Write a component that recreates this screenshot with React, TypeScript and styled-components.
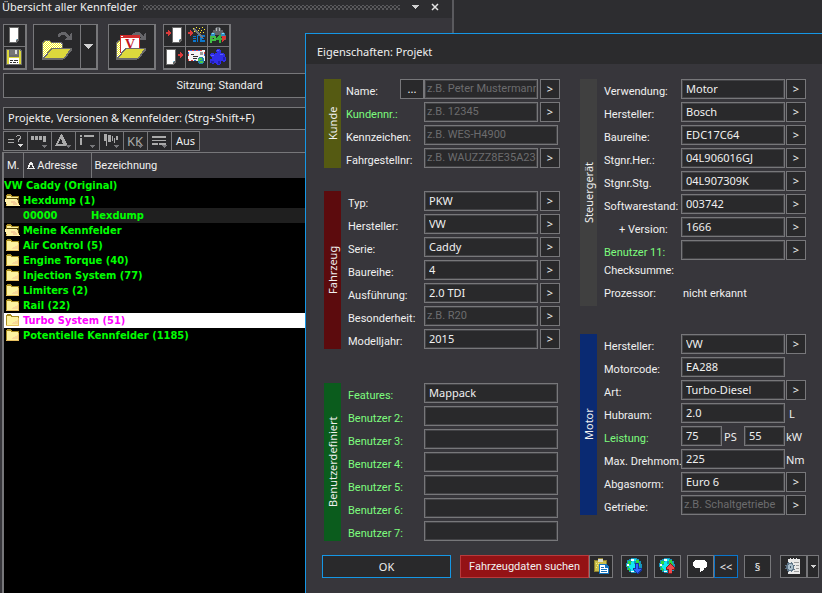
import React, { useId } from "react";
import styled, { createGlobalStyle, css } from "styled-components";

const ui = `"Noto Sans", "Open Sans", sans-serif`;
const narrow = `Roboto, "Noto Sans", sans-serif`;
const bold = `"DejaVu Sans Condensed", "Noto Sans", sans-serif`;
const line = "#77777a";
const dark = "#29292b";
const panel = "#37363b";
const green = "#7dfc7d";
const accent = "#1597e5";

const Global = createGlobalStyle`
  * { box-sizing: border-box; }
  html, body, #root { height: 100%; }
  body { margin: 0; background: #2d2d30; color: #f0f0f0; font: 11px/14px ${ui}; overflow: hidden; }
  button, input { font: inherit; color: inherit; margin: 0; }
`;

/* ---------- window and overview panel ---------- */

const Desktop = styled.div`
  position: relative;
  display: flex;
  min-height: 100vh;
`;

const Overview = styled.section`
  flex: 0 0 454px;
  display: flex;
  flex-direction: column;
  background: ${panel};
  border-right: 2px solid #5a5a5e;
`;

const TitleBar = styled.header`
  display: flex;
  align-items: center;
  height: 18px;
  padding: 0 8px 4px 2px;
  background: #2d2d30;
`;

const Title = styled.h1`
  margin: 0;
  font-size: 11px;
  font-weight: 400;
  white-space: nowrap;
`;

const Grip = styled.div`
  flex: 1;
  height: 5px;
  margin: 0 6px;
  background-image: radial-gradient(#59595c 1px, transparent 1px), radial-gradient(#59595c 1px, transparent 1px);
  background-size: 4px 4px;
  background-position: 0 0, 2px 2px;
`;

const TitleButton = styled.button`
  display: flex;
  align-items: center;
  justify-content: center;
  width: 19px;
  height: 14px;
  padding: 0;
  border: 0;
  background: none;
`;

const Toolbar = styled.div`
  display: flex;
  padding: 6px 3px 3px;
`;

const ToolGroup = styled.div<{ $columns: string; $rows?: number; $gap: number }>`
  display: grid;
  grid-template-columns: ${p => p.$columns};
  grid-template-rows: ${p => (p.$rows === 1 ? "44px" : "22px 22px")};
  margin-right: ${p => p.$gap}px;
  border: 1px solid ${line};
`;

const ToolButton = styled.button`
  display: flex;
  align-items: center;
  justify-content: center;
  min-width: 0;
  padding: 0;
  margin: -1px 0 0 -1px;
  border: 1px solid ${line};
  background: ${dark};
  width: calc(100% + 1px);
  height: calc(100% + 1px);
`;

const Session = styled.div`
  margin: 0 16px 9px 3px;
  padding: 5px 0;
  border: 1px solid ${line};
  background: ${dark};
  font-family: ${narrow};
  text-align: center;
  height: 25px;
`;

const Search = styled.input`
  margin: 0 16px 1px 3px;
  height: 23px;
  padding: 0 4px 2px;
  border: 1px solid ${line};
  border-radius: 0;
  background: ${dark};
  outline: none;
  &::placeholder { color: #f0f0f0; opacity: 1; }
`;

const Filters = styled.div`
  display: flex;
  margin: 0 3px 1px;
`;

const FilterButton = styled.button<{ $wide?: boolean }>`
  display: flex;
  align-items: center;
  justify-content: center;
  width: ${p => (p.$wide ? 29 : 25)}px;
  height: 20px;
  margin-right: -1px;
  padding: 0;
  border: 1px solid ${line};
  background: ${dark};
`;

const TreeFrame = styled.div`
  flex: 1;
  margin-left: 2px;
  border: 1px solid ${line};
  border-width: 1px 0 0 2px;
  background: #000;
`;

const Tree = styled.table`
  width: 100%;
  table-layout: fixed;
  border-collapse: collapse;
  font: 700 11px/15px ${bold};
  color: #00ff00;
`;

const HeadCell = styled.th<{ $width?: number }>`
  width: ${p => (p.$width ? `${p.$width}px` : "auto")};
  height: 25px;
  padding: 0 0 0 3px;
  border-right: 1px solid ${line};
  background: ${panel};
  color: #f0f0f0;
  font-family: ${narrow};
  font-weight: 400;
  text-align: left;
  white-space: nowrap;
`;

const TreeRow = styled.tr<{ $kind?: "shaded" | "selected" }>`
  height: 15px;
  ${p => p.$kind === "shaded" && css`background: #1f1f1f;`}
  ${p => p.$kind === "selected" && css`background: #fff; color: #ff00ff;`}
`;

const Cell = styled.td`
  padding: 0;
  height: 15px;
  white-space: nowrap;
  overflow: hidden;
`;

const Entry = styled.span`
  display: flex;
  align-items: center;
  gap: 3px;
  height: 15px;
  padding-left: 1px;
`;

/* ---------- dialog ---------- */

const Dialog = styled.form`
  position: absolute;
  inset: 33px 0 0 305px;
  display: flex;
  flex-direction: column;
  border: 1px solid ${accent};
  border-width: 1px 0 0 1px;
  background: ${panel};
`;

const DialogTitle = styled.h2`
  margin: 0 0 15px;
  height: 30px;
  padding: 11px 0 0 11px;
  background: #2b2b2d;
  font-size: 11px;
  font-weight: 400;
`;

const Columns = styled.div`
  display: grid;
  grid-template-columns: minmax(0, 236fr) minmax(0, 226fr);
  gap: 20px;
  padding: 0 16px 0 18px;
`;

const Column = styled.div<{ $gaps: string }>`
  display: grid;
  align-content: start;
  grid-template-columns: minmax(0, 1fr);
  grid-template-rows: ${p => p.$gaps};
`;

const Group = styled.section`
  display: flex;
  align-self: start;
`;

const GroupName = styled.h3<{ $color: string }>`
  flex: 0 0 17px;
  margin: 0;
  background: ${p => p.$color};
  font-size: 11px;
  line-height: 17px;
  font-weight: 400;
  text-align: center;
  writing-mode: vertical-rl;
  transform: rotate(180deg);
`;

const Rows = styled.div<{ $indent: number }>`
  flex: 1;
  min-width: 0;
  display: grid;
  grid-template-columns: minmax(0, 1fr);
  gap: 3px;
  padding-left: ${p => p.$indent}px;
`;

const Row = styled.div`
  display: flex;
  height: 20px;
`;

const Label = styled.label<{ $width: number; $user?: boolean; $inset?: boolean }>`
  flex: 0 0 ${p => p.$width}px;
  min-width: 0;
  padding: 6px 0 0 ${p => (p.$inset ? 15 : 0)}px;
  color: ${p => (p.$user ? green : "#f0f0f0")};
  font-family: ${narrow};
  white-space: nowrap;
`;

const TextField = styled.input`
  flex: 1 1 0;
  min-width: 0;
  height: 20px;
  padding: 0 1px 2px 4px;
  border: 1px solid ${line};
  border-radius: 0;
  background: ${dark};
  box-shadow: inset 0 0 0 1px #434346;
  outline: none;
  &:placeholder-shown { padding-left: 2px; font-family: ${narrow}; }
  &::placeholder { color: #6c6c6e; opacity: 1; }
`;

const PickButton = styled.button<{ $gap?: number }>`
  flex: 0 0 20px;
  height: 20px;
  margin-left: ${p => p.$gap ?? 2}px;
  padding: 0;
  border: 1px solid ${line};
  background: ${dark};
  line-height: 16px;
`;

const MoreButton = styled(PickButton)`
  flex-basis: 24px;
`;

const Unit = styled.span<{ $width: number; $pad?: number }>`
  flex: 0 0 ${p => p.$width}px;
  padding: 4px 0 0 ${p => p.$pad ?? 2}px;
`;

const Spacer = styled.span<{ $width: number }>`
  flex: 0 0 ${p => p.$width}px;
`;

const Value = styled.output`
  padding: 0 0 0 2px;
  font-family: ${narrow};
`;

const PlainRow = styled(Row)`
  & > * { padding-top: 1px; }
`;

const Footer = styled.footer`
  display: flex;
  height: 23px;
  margin-top: 14px;
  padding: 0 3px 0 16px;
`;

const Action = styled.button<{ $width?: number; $gap?: number; $tone?: "ok" | "alert" | "active" }>`
  flex: ${p => (p.$width ? `0 0 ${p.$width}px` : "1 1 0")};
  display: flex;
  align-items: center;
  justify-content: center;
  min-width: 0;
  height: 23px;
  margin-left: ${p => p.$gap ?? 0}px;
  padding: 0;
  border: 1px solid ${line};
  background: ${dark};
  white-space: nowrap;
  ${p => p.$tone === "ok" && css`border-color: ${accent};`}
  ${p => p.$tone === "active" && css`border-color: #0a76cc;`}
  ${p => p.$tone === "alert" && css`border-color: #b93a3c; background: #941215; font-family: ${narrow};`}
`;

/* ---------- icons ---------- */

const Svg = ({ w = 17, h = 17, children }: { w?: number; h?: number; children: React.ReactNode }) => (
  <svg width={w} height={h} viewBox={`0 0 ${w} ${h}`} shapeRendering="crispEdges" aria-hidden="true">
    {children}
  </svg>
);

const Sheet = ({ x = 0 }: { x?: number }) => (
  <g transform={`translate(${x} 0)`}>
    <path d="M0 0h10v13l-3 3h-7z" fill="#6b6b6b" />
    <path d="M1 1h8v11h-2v3h-6z" fill="#fff" />
    <path d="M7 12h1v1h-1z" fill="#7fd0e8" />
  </g>
);

const Floppy = () => (
  <Svg>
    <path d="M0 0h14l2 2v14h-16z" fill="#6b6b6b" />
    <path d="M1 1h2v7h10v-7h1l1 2v12h-14z" fill="#dcd83c" />
    <path d="M4 1h8v5h-8z" fill="#777" />
    <path d="M9 1h2v4h-2z" fill="#ddd" />
    <path d="M3 9h10v6h-10z" fill="#fff" />
    <path d="M4 11h3v1h-3zM8 11h4v1h-4zM4 13h2v1h-2zM7 13h3v1h-3zM11 13h1v1h-1z" fill="#333" />
  </Svg>
);

const OpenFolder = ({ version }: { version?: boolean }) => (
  <Svg w={version ? 31 : 30} h={31}>
    <defs>
      <pattern id="dither" width="2" height="2" patternUnits="userSpaceOnUse">
        <rect width="2" height="2" fill="#f4f020" />
        <path d="M0 0h1v1h-1zM1 1h1v1h-1z" fill="#fff" />
      </pattern>
    </defs>
    <path d="M16 4v-1h1v-1h2v-1h5v1h1v1h1v1h1v1h1v-2h1v-1h1v7h-7v-1h1v-1h1v-1h-1v-1h-1v-1h-4v1h-1v1h-2z" fill="#66666a" />
    <path d="M0 29v-18l2-2h5l2 2h10l2 2v16z" fill="#6b6b6b" />
    <path d="M1 26v-14l2-2h4l2 2h9l2 2v10z" fill="url(#dither)" />
    {version && (
      <>
        <path d="M4 4h20v18h-20z" fill="#d02c2c" />
        <path d="M5 7h18v15h-18z" fill="#fff" />
        <path d="M5 5h2v1h-2z" fill="#fff" />
        <text x="14" y="18" textAnchor="middle" fontFamily="Liberation Serif" fontWeight="700" fontSize="14" fill="#c4161c">V</text>
      </>
    )}
    <path d="M1 28v-1l8-10h21v2l-7 9z" fill="#6b6b6b" />
    <path d="M3 27l7-9h18l-6 9z" fill="#dcd83c" />
  </Svg>
);

const RedArrow = ({ x }: { x: number }) => <path d={`M${x} 5h2v-2h1v1h1v1h1v2h-1v1h-1v1h-1v-2h-2z`} fill="#dc3a3a" />;

const ImportIcon = () => <Svg><RedArrow x={0} /><Sheet x={6} /></Svg>;
const ExportIcon = () => <Svg><Sheet /><RedArrow x={12} /></Svg>;

const Wizard = () => (
  <Svg>
    <RedArrow x={0} />
    <path d="M5 9h3v1h-3zM5 11h3v1h-3zM5 13h3v2h-3zM9 8h1v7h-1zM10 8h1v1h-1zM12 8h5v2h-3v1h2v1h-2v1h3v2h-5z" fill="#0b78d0" />
    <path d="M5 1h2v1h1v1h1v1h1v1h1v1h1v1h1v1h1v1h1v2h-2v-1h-1v-1h-1v-1h-1v-1h-1v-1h-1v-1h-1v-1h-1v-1h-1z" fill="#77777b" />
    <path d="M5 1h1v1h-1zM8 0h1v1h-1zM11 1h1v1h-1zM14 0h1v1h-1zM10 3h1v1h-1zM13 3h1v1h-1zM16 2h1v1h-1zM12 5h1v1h-1zM15 5h1v1h-1zM6 4h1v1h-1z" fill="#ffee30" />
  </Svg>
);

const Binoculars = () => (
  <Svg>
    <path d="M6 0h4v1h1v2h2v2h1v1h1v2h1v5h-3v-3h-2v-2h-6v2h-2v3h-3v-5h1v-2h1v-1h1v-2h2v-2h1z" fill="#606468" />
    <path d="M6 1h1v3h-1zM9 1h1v3h-1z" fill="#b4b7ba" />
    <path d="M1 6h4v3h-4zM11 6h4v3h-4z" fill="#2f8dc1" />
    <path d="M2 6h2v1h-2zM12 6h2v1h-2z" fill="#81e1f4" />
    <path d="M0 9h6v5h-4v2h-2zM2 11v1h2v-1z" fill="#42bf45" fillRule="evenodd" />
    <path d="M9 8h2v3h1v2h-1v3h-2v-3h-3v-2h1v-1h1v-1h1z" fill="#35b33c" />
    <path d="M12 9h4v3h-1v1h-1v1h-1v1h-1z" fill="#db3634" />
  </Svg>
);

const Mail = () => (
  <Svg>
    <path d="M0 1h17v11h-17z" fill="#f4f4f4" />
    <path d="M0 1h2v1h-2zM4 1h2v1h-2zM8 1h2v1h-2zM12 1h2v1h-2zM0 5h1v2h-1zM0 10h1v2h-1zM16 3h1v2h-1zM3 11h2v1h-2z" fill="#dd3c3c" />
    <path d="M2 1h2v1h-2zM6 1h2v1h-2zM10 1h2v1h-2zM0 3h1v2h-1zM16 5h1v2h-1zM6 11h2v1h-2z" fill="#3564cc" />
    <path d="M3 5h3v1h-3zM5 7h5v1h-5zM5 9h4v1h-4z" fill="#333" />
    <path d="M12 3h3v3h-3z" fill="#999" />
    <path d="M11 8h4v1h1v5h-1v1h-4v-1h-1v-5h1z" fill="#2484ae" />
    <path d="M11 9h3v2h-2v1h-2v-2zM12 12h3v2h-3z" fill="#49ca49" />
  </Svg>
);

const Puzzle = () => (
  <Svg>
    <path d="M6 1h1v-1h3v1h1v3h3v1h1v3h1v4h-1v1h-2v-1h-2v3h-1v1h-3v-1h-1v-1h-2v1h-2v-1h-2v-4h2v-2h-1v-1h-1v-2h1v-1h3v1h1v-1h2v-1h-1z" fill="#302de8" />
    <path d="M7 1h2v1h-2zM10 5h3v1h-3zM1 6h3v1h-3z" fill="#5b60f6" />
    <path d="M1 12h3v2h-3zM8 12h2v3h-2zM13 8h2v3h-2z" fill="#211fb0" />
  </Svg>
);

const Arrow = ({ w, h, color = "#d0d0d0" }: { w: number; h: number; color?: string }) => (
  <Svg w={w} h={h}><path d={`M0 0H${w}L${w / 2} ${h}Z`} fill={color} /></Svg>
);

const Close = () => (
  <svg width="8" height="8" viewBox="0 0 8 8" aria-hidden="true">
    <path d="M1 1l6 6M7 1l-6 6" stroke="#e4e4e4" strokeWidth="1.5" />
  </svg>
);

const gray = "#aaa";
const filterArt: Record<string, React.ReactNode> = {
  Vergleich: <><path d="M1 6h6v1h-6zM1 9h6v1h-6zM9 3h1v-1h3v1h1v3h-1v1h-1v2h-1v-3h1v-1h1v-2h-3v1h-1z" fill={gray} /><path d="M11 11h5l-3 3z" fill="#ddd" /></>,
  Balken: <path d="M0 3h3v4h-3zM4 3h3v4h-3zM8 3h3v4h-3zM12 3h3v6h-3z" fill={gray} />,
  Differenz: <path d="M6 1h1l6 12h-13zM6 5l-3 6h5z" fill={gray} fillRule="evenodd" />,
  Achse: <path d="M1 2h2v2h-2zM1 5h2v7h-2zM5 2h10v2h-10z" fill={gray} />,
  Verlauf: <path d="M1 1h3v12h-1v-5h-2zM5 2h3v7h-3zM9 3h1v5h-1zM11 5h1v5h-1zM13 3h2v4h-2z" fill={gray} />,
  Kennung: <text x="0" y="13" fontFamily="Noto Sans" fontSize="13" fill={gray}>KK</text>,
  Liste: <path d="M1 3h14v2h-14zM1 7h14v1h-14zM1 10h6v2h-6zM8 10h7v2h-7z" fill={gray} />,
};

const FilterIcon = ({ name }: { name: string }) => (
  <Svg h={16}>{filterArt[name]}{name !== "Vergleich" && <path d="M11 12h5l-3 3z" fill="#77777a" />}</Svg>
);

const SmallFolder = ({ open }: { open?: boolean }) => (
  <Svg w={15} h={13}>
    <path d="M1 1h1v-1h4v1h1v1h7v10h-13z" fill="#a88c22" />
    <path d="M2 2h4v1h7v8h-11z" fill="#fdf3a0" />
    <path d="M2 11h11v-7h1v8h-13v-1z" fill="#e8c060" />
    <path d="M7 10h6v-5l-2 2h-1v1h-2z" fill="#f9d898" />
    {open && (
      <>
        <path d="M2 5h9l2 2v2h1v-5h-12z" fill="#5c4a08" />
        <path d="M0 5h10v1h1v1h1v1h1v2h1v1h1v1h-13v-2h-1v-2h-1z" fill="#fff0a8" />
        <path d="M6 7h4v1h1v1h1v2h-4v-2h-2z" fill="#f6cf98" />
      </>
    )}
  </Svg>
);

const Clipboard = () => (
  <Svg w={16}>
    <path d="M1 2h4v-2h5v2h4v12h-13z" fill="#8d812c" />
    <path d="M2 3h11v10h-11z" fill="#c9bd4c" />
    <path d="M5 1h5v3h-5z" fill="#dfdfcf" />
    <path d="M3 5h1v1h-1zM5 5h1v1h-1zM4 7h1v1h-1zM3 9h1v1h-1z" fill="#f4f083" />
    <path d="M6 6h7l3 3v7h-10z" fill="#1273be" />
    <path d="M7 7h5v3h3v5h-8z" fill="#fff" />
    <path d="M8 9h3v1h-3zM8 11h6v1h-6zM8 13h6v1h-6z" fill="#1573bd" />
  </Svg>
);

const Globe = ({ up }: { up?: boolean }) => (
  <Svg>
    <path d="M5 0h6v1h2v2h2v3h1v4h-1v3h-2v2h-8v-1h-2v-2h-2v-3h-1v-4h1v-3h2v-1h2z" fill="#1696bd" />
    <path d="M6 1h4v2h-2v3h2v4h-2v3h-3v-2h-2v-4h2v-3h1z" fill="#12eaf0" />
    <path d="M2 3h3v3h-2v3h-2v-3h1zM10 2h3v3h1v3h-3v-2h-1v-3zM2 10h2v3h-1z" fill="#30d83d" />
    <path d="M5 1h3v2h-3zM1 6h2v2h-2zM5 13h3v1h-3z" fill="#fff" />
    {up
      ? <><path d="M11 5h1l4 5v2h-3v4h-4v-4h-2v-2z" fill="#7d1d20" /><path d="M11 6h1l3 4v1h-2v4h-3v-4h-2v-1z" fill="#f4484b" /></>
      : <><path d="M9 5h4v5h3v2l-4 4h-1l-4-4v-2h2z" fill="#1733a0" /><path d="M10 6h2v5h3l-3 4h-1l-3-4h2z" fill="#2e68ff" /></>}
  </Svg>
);

const Bubble = () => (
  <Svg w={15} h={13}>
    <path d="M2 0h10v1h1v1h1v5h-1v1h-2v2h-1v1h-2v1h-1v-4h-5v-1h-1v-1h-1v-4h1v-1h1z" fill="#fff" />
  </Svg>
);

const SheetGear = () => (
  <Svg>
    <path d="M3 1h2v-1h1v1h2v-1h1v1h2v-1h1v1h3v15h-12z" fill="#e9e9e9" />
    <path d="M9 4h5v1h-5zM11 7h3v1h-3zM11 10h3v1h-3zM9 13h5v1h-5z" fill="#9d9d9d" />
    <path d="M3 4h1v1h2v-1h1v1h1v2h2v1h-1v3h1v1h-2v1h-1v1h-1v-1h-2v1h-1v-1h-1v-2h-2v-1h1v-2h-1v-1h2v-2h1z" fill="#5f7587" />
    <path d="M4 6h3v1h1v4h-1v1h-3v-1h-1v-4h1z" fill="#a8bdcb" />
    <path d="M5 8h1v2h-1z" fill="#445566" />
  </Svg>
);

/* ---------- data ---------- */

type FieldDef = {
  label: string;
  value?: string;
  hint?: string;
  user?: boolean;
  inset?: boolean;
  more?: boolean;
  pick?: boolean;
  unit?: string;
  unitPad?: number;
};

const customer: FieldDef[] = [
  { label: "Name:", hint: "z.B. Peter Mustermann", more: true, pick: true },
  { label: "Kundennr.:", hint: "z.B. 12345", user: true, pick: true },
  { label: "Kennzeichen:", hint: "z.B. WES-H4900" },
  { label: "Fahrgestellnr:", hint: "z.B. WAUZZZ8E35A235", pick: true },
];

const vehicle: FieldDef[] = [
  { label: "Typ:", value: "PKW", pick: true },
  { label: "Hersteller:", value: "VW", pick: true },
  { label: "Serie:", value: "Caddy", pick: true },
  { label: "Baureihe:", value: "4", pick: true },
  { label: "Ausführung:", value: "2.0 TDI", pick: true },
  { label: "Besonderheit:", hint: "z.B. R20", pick: true },
  { label: "Modelljahr:", value: "2015", pick: true },
];

const custom: FieldDef[] = [
  { label: "Features:", value: "Mappack", user: true },
  ...[2, 3, 4, 5, 6, 7].map(n => ({ label: `Benutzer ${n}:`, value: "", user: true })),
];

const ecu: FieldDef[] = [
  { label: "Verwendung:", value: "Motor", pick: true },
  { label: "Hersteller:", value: "Bosch", pick: true },
  { label: "Baureihe:", value: "EDC17C64", pick: true },
  { label: "Stgnr.Her.:", value: "04L906016GJ", pick: true },
  { label: "Stgnr.Stg.", value: "04L907309K", pick: true },
  { label: "Softwarestand:", value: "003742", pick: true },
  { label: "+ Version:", value: "1666", inset: true, pick: true },
  { label: "Benutzer 11:", value: "", user: true, pick: true },
];

const engineTop: FieldDef[] = [
  { label: "Hersteller:", value: "VW", pick: true },
  { label: "Motorcode:", value: "EA288" },
  { label: "Art:", value: "Turbo-Diesel", pick: true },
  { label: "Hubraum:", value: "2.0", unit: "L", unitPad: 4 },
];

const engineBottom: FieldDef[] = [
  { label: "Max. Drehmom.", value: "225", unit: "Nm", unitPad: 1 },
  { label: "Abgasnorm:", value: "Euro 6", pick: true },
  { label: "Getriebe:", hint: "z.B. Schaltgetriebe", pick: true },
];

const folders: { name: string; open?: boolean; selected?: boolean }[] = [
  { name: "Meine Kennfelder", open: true },
  { name: "Air Control (5)" },
  { name: "Engine Torque (40)" },
  { name: "Injection System (77)" },
  { name: "Limiters (2)" },
  { name: "Rail (22)" },
  { name: "Turbo System (51)", selected: true },
  { name: "Potentielle Kennfelder (1185)" },
];

/* ---------- composed parts ---------- */

const Field = ({ def, labelWidth, tail, gap }: { def: FieldDef; labelWidth: number; tail: number; gap?: number }) => {
  const id = useId();
  return (
    <Row>
      <Label htmlFor={id} $width={def.more ? labelWidth - 24 : labelWidth} $user={def.user} $inset={def.inset}>{def.label}</Label>
      {def.more && <MoreButton type="button" $gap={0} aria-label="Name auswählen">...</MoreButton>}
      <TextField id={id} defaultValue={def.value} placeholder={def.hint} />
      {def.pick && <PickButton type="button" $gap={gap} aria-label={`${def.label} Auswahl`}>&gt;</PickButton>}
      {def.unit && <Unit $width={tail} $pad={def.unitPad}>{def.unit}</Unit>}
      {!def.pick && !def.unit && <Spacer $width={tail} />}
    </Row>
  );
};

const FieldGroup = ({ name, color, indent, children }: { name: string; color: string; indent: number; children: React.ReactNode }) => (
  <Group aria-label={name}>
    <GroupName $color={color}>{name}</GroupName>
    <Rows $indent={indent}>{children}</Rows>
  </Group>
);

const Power = () => {
  const id = useId();
  return (
    <Row>
      <Label htmlFor={id} $width={77} $user>Leistung:</Label>
      <TextField id={id} defaultValue="75" />
      <Unit $width={22}>PS</Unit>
      <TextField aria-label="Leistung in kW" defaultValue="55" />
      <Unit $width={21} $pad={1}>kW</Unit>
    </Row>
  );
};

export default function App() {
  return (
    <Desktop>
      <Global />
      <Overview>
        <TitleBar>
          <Title>Übersicht aller Kennfelder</Title>
          <Grip />
          <TitleButton aria-label="Menü"><Arrow w={9} h={4} /></TitleButton>
          <TitleButton aria-label="Schließen"><Close /></TitleButton>
        </TitleBar>
        <Toolbar>
          <ToolGroup $columns="22px" $gap={6}>
            <ToolButton aria-label="Neu"><Svg w={11}><Sheet /></Svg></ToolButton>
            <ToolButton aria-label="Speichern"><Floppy /></ToolButton>
          </ToolGroup>
          <ToolGroup $columns="47px 16px" $rows={1} $gap={10}>
            <ToolButton aria-label="Öffnen"><OpenFolder /></ToolButton>
            <ToolButton aria-label="Zuletzt geöffnet"><Arrow w={11} h={5} /></ToolButton>
          </ToolGroup>
          <ToolGroup $columns="46px" $rows={1} $gap={7}>
            <ToolButton aria-label="Version öffnen"><OpenFolder version /></ToolButton>
          </ToolGroup>
          <ToolGroup $columns="22px 22px 22px" $gap={0}>
            <ToolButton aria-label="Importieren"><ImportIcon /></ToolButton>
            <ToolButton aria-label="Assistent"><Wizard /></ToolButton>
            <ToolButton aria-label="Suchen"><Binoculars /></ToolButton>
            <ToolButton aria-label="Exportieren"><ExportIcon /></ToolButton>
            <ToolButton aria-label="Senden"><Mail /></ToolButton>
            <ToolButton aria-label="Erweiterungen"><Puzzle /></ToolButton>
          </ToolGroup>
        </Toolbar>
        <Session>Sitzung: Standard</Session>
        <Search aria-label="Suche" placeholder="Projekte, Versionen & Kennfelder: (Strg+Shift+F)" />
        <Filters>
          {Object.keys(filterArt).map(name => (
            <FilterButton key={name} aria-label={name}><FilterIcon name={name} /></FilterButton>
          ))}
          <FilterButton $wide>Aus</FilterButton>
        </Filters>
        <TreeFrame>
          <Tree>
            <thead>
              <tr>
                <HeadCell $width={19}>M.</HeadCell>
                <HeadCell $width={68}>
                  <Svg w={8} h={7}><path d="M3 0h2l3 7h-8zM4 2l-2 4h4z" fill="#eee" fillRule="evenodd" /></Svg> Adresse
                </HeadCell>
                <HeadCell>Bezeichnung</HeadCell>
              </tr>
            </thead>
            <tbody>
              <TreeRow><Cell colSpan={3}>VW Caddy (Original)</Cell></TreeRow>
              <TreeRow><Cell colSpan={3}><Entry><SmallFolder open />Hexdump (1)</Entry></Cell></TreeRow>
              <TreeRow $kind="shaded"><Cell /><Cell>00000</Cell><Cell>Hexdump</Cell></TreeRow>
              {folders.map(f => (
                <TreeRow key={f.name} $kind={f.selected ? "selected" : undefined}>
                  <Cell colSpan={3}><Entry><SmallFolder open={f.open} />{f.name}</Entry></Cell>
                </TreeRow>
              ))}
            </tbody>
          </Tree>
        </TreeFrame>
      </Overview>

      <Dialog role="dialog" aria-labelledby="dialog-title" onSubmit={e => e.preventDefault()}>
        <DialogTitle id="dialog-title">Eigenschaften: Projekt</DialogTitle>
        <Columns>
          <Column $gaps="112px 192px auto">
            <FieldGroup name="Kunde" color="#555a12" indent={5}>
              {customer.map(d => <Field key={d.label} def={d} labelWidth={78} tail={2} />)}
            </FieldGroup>
            <FieldGroup name="Fahrzeug" color="#5c0b0d" indent={7}>
              {vehicle.map(d => <Field key={d.label} def={d} labelWidth={76} tail={2} />)}
            </FieldGroup>
            <FieldGroup name="Benutzerdefiniert" color="#0b5c1d" indent={7}>
              {custom.map(d => <Field key={d.label} def={d} labelWidth={76} tail={2} />)}
            </FieldGroup>
          </Column>
          <Column $gaps="255px auto">
            <FieldGroup name="Steuergerät" color="#404040" indent={7}>
              {ecu.map(d => <Field key={d.label} def={d} labelWidth={77} tail={21} gap={1} />)}
              <PlainRow><Label as="span" $width={77}>Checksumme:</Label></PlainRow>
              <PlainRow><Label as="span" $width={77}>Prozessor:</Label><Value>nicht erkannt</Value></PlainRow>
            </FieldGroup>
            <FieldGroup name="Motor" color="#0a2a72" indent={7}>
              {engineTop.map(d => <Field key={d.label} def={d} labelWidth={77} tail={21} gap={1} />)}
              <Power />
              {engineBottom.map(d => <Field key={d.label} def={d} labelWidth={77} tail={21} gap={1} />)}
            </FieldGroup>
          </Column>
        </Columns>
        <Footer>
          <Action type="submit" $tone="ok">OK</Action>
          <Action type="button" $tone="alert" $gap={9}>Fahrzeugdaten suchen</Action>
          <Action type="button" $width={24} aria-label="Einfügen"><Clipboard /></Action>
          <Action type="button" $width={27} $gap={8} aria-label="Herunterladen"><Globe /></Action>
          <Action type="button" $width={27} $gap={6} aria-label="Hochladen"><Globe up /></Action>
          <Action type="button" $width={27} $gap={6} aria-label="Kommentar"><Bubble /></Action>
          <Action type="button" $width={24} $tone="active">&lt;&lt;</Action>
          <Action type="button" $width={27} $gap={6}>§</Action>
          <Action type="button" $width={27} $gap={9} aria-label="Bericht"><SheetGear /></Action>
          <Action type="button" $width={12} aria-label="Berichtsoptionen"><Arrow w={6} h={3} /></Action>
        </Footer>
      </Dialog>
    </Desktop>
  );
}
